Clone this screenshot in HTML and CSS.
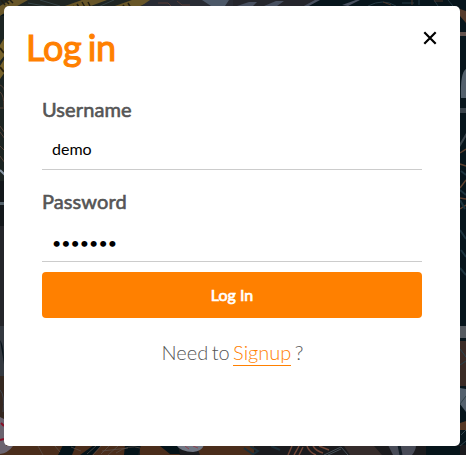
FILE: index.html
```
<!DOCTYPE html>
<html lang="en">
<head>
<meta charset="utf-8">
<title>Log in</title>
<link rel="stylesheet" href="styles.css">
</head>
<body>
<svg class="backdrop" viewBox="0 0 466 455" aria-hidden="true">
  <rect width="466" height="455" fill="#07151c"/>
  <!-- top edge -->
  <path d="M0 0H150V7H0Z" fill="#202623"/>
  <path d="M0 6L10 0H28L3 14L0 16ZM62 7L82 0H107L88 7ZM112 7L132 0H154L138 7Z" fill="#685628"/>
  <path d="M1 0l4 5m0-5l4 4m1-4l3 3m60 3l3 4m1-6l4 6m1-8l4 7m2-7l3 6m32-3l3 4m2-6l3 5" stroke="#211e14" stroke-width="1.5"/>
  <path d="M28 3L50 7M40 0l20 6M98 7l16-7" stroke="#354447" fill="none"/>
  <path d="M150 0H233V7H140Z" fill="#292c34"/>
  <path d="M158 3h10l3 3m6-5l5 4h8" stroke="#593d36" fill="none"/>
  <path d="M202 0H229L225 6H211Z" fill="#4c5868"/>
  <path d="M233 0H318L306 7H233Z" fill="#25262c"/>
  <path d="M237 6l12-4h8l-4 4M264 6l12-5h8l-7 5M302 7l13-7h5l-13 7M342 5l14-5h4l-12 6M370 6l16-6" fill="#485060"/>
  <path d="M368 6q15-8 28 0m6-3h12m5-3v5m15-5l4 6m10-6l5 6" stroke="#253a44" fill="none"/>
  <path d="M383 2l8 3m21-5v5m22-4h9" stroke="#4b3528"/>
  <!-- left edge -->
  <path d="M0 16H5V181H0Z" fill="#1c2422"/>
  <path d="M0 45L5 37V55L0 61ZM0 66L5 58V72L0 79Z" fill="#75612a"/>
  <path d="M0 48l4 5m-4 14l4 5" stroke="#27200e" stroke-width="2"/>
  <path d="M0 85q5 2 5 10M0 92q4 3 4 15M0 108h5M0 126l5 7M0 132l5 7m-5 7l5 5m-5 5l5 7" stroke="#574338" fill="none"/>
  <path d="M0 170l5 5" stroke="#8b98a6" stroke-width="2"/>
  <rect y="181" width="5" height="145" fill="#13171b"/>
  <path d="M0 202h5v3H0Z" fill="#536069"/>
  <path d="M0 226h5v100H0Z" fill="#24252a"/>
  <path d="M0 326H5V376H0Z" fill="#343940"/>
  <path d="M0 340q4 5 4 24" fill="#08141a"/>
  <path d="M0 376h5v79H0Z" fill="#342720"/>
  <path d="M0 390q5 5 3 22" stroke="#3d424b" fill="none"/>
  <!-- bottom edge -->
  <rect y="445" width="466" height="10" fill="#1b1b1e"/>
  <path d="M0 445H125V455H0ZM140 445H173L180 455H140ZM196 445H254V455H200Z" fill="#4a2d1b"/>
  <path d="M0 417L6 420V446H13Q8 453 0 454Z" fill="#6b6470"/>
  <path d="M1 423l3 3m-4 14l4-1" stroke="#870f27" stroke-width="2"/>
  <path d="M58 455l5-10h13l-4 10M80 455l14-10h8l-10 10M125 445h16l-3 10h-14M160 446l18 0 2 8h-10" fill="#051319"/>
  <path d="M87 454l9-8m-3 9l8-9m0 8l8-8m-1 9l10-9m-16 5l26-3m-12 5q13-9 24-5M38 446l5 9m12-9l5 6m11-5l10 4" stroke="#5b504b" stroke-width=".7" fill="none"/>
  <path d="M176 445H204Q202 451 193 452Q181 452 176 445Z" fill="#717784"/>
  <path d="M185 446l4 3m4-3l5 2" stroke="#904451"/>
  <path d="M250 446l8 5-6 4m-8-7l10 7m17-9l9 4" stroke="#1d2f38" stroke-width="2" fill="none"/>
  <path d="M288 455l4-9m2 9l5-9m0 9l4-8m4-1q2 6 9 9m-3-9q3 5 10 7m-4-7l10 4" stroke="#704536" stroke-width="1.5" fill="none"/>
  <path d="M324 455l17-8 7 8m-20 0l13-6" stroke="#454f57" fill="none"/>
  <path d="M344 446h30l8 9h-32Z" fill="#352c2b"/>
  <path d="M388 445h28q0 5-4 10h-19Z" fill="#484b57"/>
  <path d="M399 445l2 10" stroke="#121d25" stroke-width="3"/>
  <path d="M426 446h34v9h-34Z" fill="#06141a"/>
  <!-- right edge -->
  <path d="M460 9l6 2v12l-6-7Z" fill="#553b2b"/>
  <path d="M460 32h6v4h-6M460 44l5 7" fill="#62524d"/>
  <path d="M466 69Q460 73 461 98H466Z" fill="#53606c"/>
  <path d="M460 108h6v5h-6M460 143l6-10v4l-6 10" fill="#39434b"/>
  <path d="M460 153l6-4m-6 15l6 2m-6 22l6-8m-6 18l6 1m-6 10l6-4" stroke="#5a3f2f" stroke-width="1.5"/>
  <path d="M461 171l5 4m-6 15l6 5m-6 5l5 9m-5 21l6 9m-5 11l5 7m-6 11l6 7" stroke="#1c333d" stroke-width="2"/>
  <rect x="460" y="326" width="6" height="12" fill="#565b61"/>
  <rect x="460" y="341" width="6" height="45" fill="#3a2b26"/>
  <path d="M460 349l6 8m-6 8l6-4" stroke="#29434d"/>
  <path d="M460 388l6 1v23l-6-8Z" fill="#53606d"/>
  <path d="M460 404l6-8M461 435l5-5m-6 16l6-5" stroke="#32434b"/>
  <path d="M460 423l6-2v9h-6Z" fill="#553825"/>
</svg>
<main class="modal">
  <header class="modal-header">
    <h1 class="title">Log in</h1>
    <button class="close" type="button" aria-label="Close">
      <svg viewBox="0 0 14 14" width="14" height="14"><path d="M1.3 1.3L12.7 12.7M12.7 1.3L1.3 12.7"/></svg>
    </button>
  </header>
  <form class="form">
    <label class="label" for="username">Username</label>
    <input class="field" id="username" type="text" value="demo">
    <label class="label" for="password">Password</label>
    <input class="field" id="password" type="password" value="1234567">
    <button class="submit" type="button">Log In</button>
  </form>
  <p class="signup">Need to <a class="link" href="#">Signup</a> ?</p>
</main>
</body>
</html>
```
FILE: styles.css
```
* {
  box-sizing: border-box;
}

body {
  margin: 0;
  height: 455px;
  overflow: hidden;
  background: #07151c;
  font-family: Lato, sans-serif;
}

.backdrop {
  position: absolute;
  inset: 0;
  width: 466px;
  height: 455px;
}

.modal {
  position: relative;
  width: 456px;
  height: 440px;
  margin: 6px 0 0 4px;
  background: #fff;
  border-radius: 5px;
}

.modal-header {
  display: flex;
  justify-content: space-between;
  align-items: flex-start;
  height: 89px;
  padding: 19px 23px 0 22px;
}

.title {
  margin: 0;
  color: #ff8000;
  font-size: 36px;
  line-height: 44px;
  font-weight: 400;
  letter-spacing: -0.2px;
  word-spacing: -3px;
  -webkit-text-stroke: 1.1px #ff8000;
}

.close {
  display: flex;
  margin-top: 6px;
  padding: 0;
  border: 0;
  background: none;
}

.close path {
  fill: none;
  stroke: #000;
  stroke-width: 2.2;
}

.form {
  display: flex;
  flex-direction: column;
  padding: 0 38px;
}

.label {
  height: 28px;
  color: #555;
  font-size: 20px;
  line-height: 28px;
  font-weight: 400;
  letter-spacing: 0.1px;
  -webkit-text-stroke: 0.6px #555;
}

.field {
  width: 100%;
  height: 47px;
  margin: 0 0 17px;
  padding: 12px 10px 8px;
  border: 0;
  border-bottom: 1px solid #ccc;
  border-radius: 0;
  outline: 0;
  background: transparent;
  color: #000;
  font-family: inherit;
  font-size: 16px;
}

.field[type="password"] {
  padding: 14px 10px 6px;
}

.submit {
  height: 46px;
  margin-top: -7px;
  padding: 0 0 2px;
  border: 0;
  border-radius: 4px;
  background: #ff8000;
  color: #fff;
  font-family: inherit;
  font-size: 16px;
  font-weight: 400;
  -webkit-text-stroke: 0.7px #fff;
}

.signup {
  margin: 21px 0 0;
  padding-left: 1px;
  color: #555;
  font-size: 20px;
  line-height: 26px;
  font-weight: 300;
  text-align: center;
  word-spacing: -2px;
}

.link {
  padding-bottom: 1px;
  color: #ff8000;
  text-decoration: none;
  border-bottom: 1px solid #ff8000;
}
```
